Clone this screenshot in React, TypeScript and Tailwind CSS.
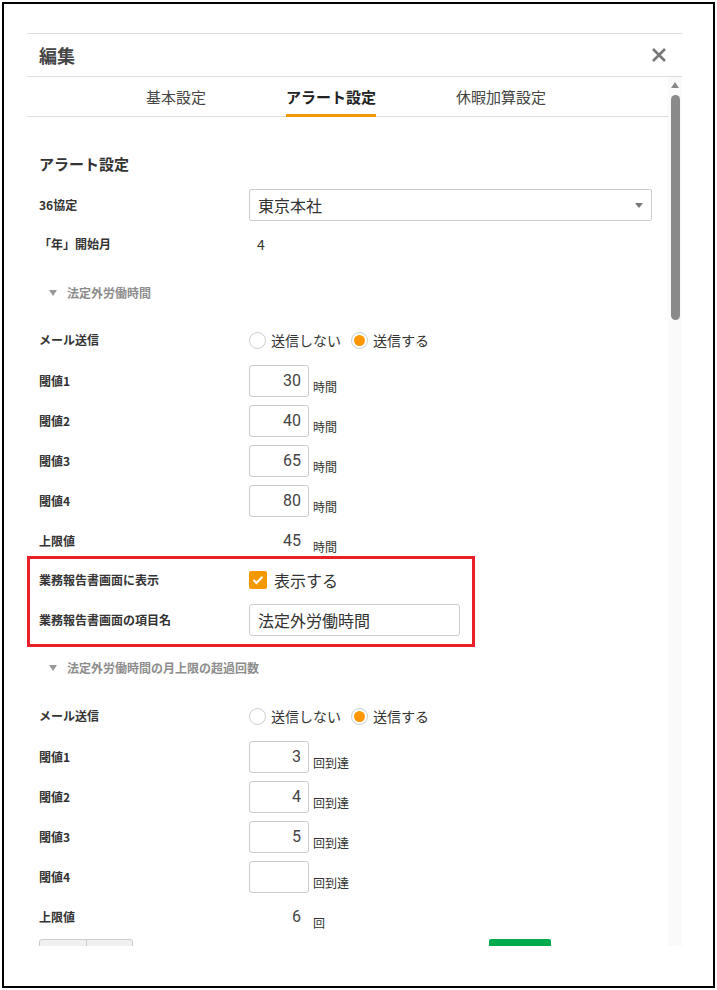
import React from "react";

const FONT = { fontFamily: '"Noto Sans CJK JP", "Noto Sans", sans-serif' };

function Label({ children }: { children: React.ReactNode }) {
  return (
    <div className="w-[210px] shrink-0 text-[12px] font-bold text-[#333] leading-[16px]">
      {children}
    </div>
  );
}

function NumRow({
  label,
  value,
  unit,
  plain,
  first,
}: {
  label: string;
  value: string;
  unit: string;
  plain?: boolean;
  first?: boolean;
}) {
  return (
    <div className={`${first ? "mt-[10px]" : "mt-[8px]"} flex h-[32px] items-center`}>
      <Label>{label}</Label>
      <div className="flex h-full items-end">
        {plain ? (
          <div className="flex h-[32px] w-[60px] items-center justify-end pr-[8px] text-[16px] text-[#444]" style={{ fontFamily: 'Roboto, "Liberation Sans", Arial, sans-serif' }}>
            {value}
          </div>
        ) : (
          <div className="flex h-[32px] w-[60px] items-center justify-end rounded-[3px] border border-[#ccc] bg-white pr-[7px] text-[16px] text-[#444]" style={{ fontFamily: 'Roboto, "Liberation Sans", Arial, sans-serif' }}>
            {value}
          </div>
        )}
        <div className="mb-[2px] ml-[4px] text-[12px] leading-[16px] text-[#333]">{unit}</div>
      </div>
    </div>
  );
}

function SectionHeader({ children, className }: { children: React.ReactNode; className: string }) {
  return (
    <div className={`${className} flex h-[30px] items-center pl-[10px]`}>
      <svg width="8" height="6" viewBox="0 0 8 6" className="mr-[10px]">
        <polygon points="0,0 8,0 4,6" fill="#999" />
      </svg>
      <span className="text-[12px] font-bold text-[#8c8c8c]">{children}</span>
    </div>
  );
}

function Radio({ checked, label }: { checked?: boolean; label: string }) {
  return (
    <div className="flex items-center">
      <div className="flex h-[17px] w-[17px] items-center justify-center rounded-full border border-[#ccc] bg-white">
        {checked && <div className="h-[11px] w-[11px] rounded-full bg-[#ff9800]" />}
      </div>
      <span className="ml-[5px] text-[14px] text-[#333]">{label}</span>
    </div>
  );
}

function MailRow({ className }: { className: string }) {
  return (
    <div className={`${className} flex h-[30px] items-center`}>
      <Label>メール送信</Label>
      <div className="flex items-center gap-[10px]">
        <Radio label="送信しない" />
        <Radio checked label="送信する" />
      </div>
    </div>
  );
}

export default function App() {
  return (
    <div className="h-[990px] w-[717px] bg-white p-[2px]" style={FONT}>
      <div className="h-full border-2 border-black pl-[23px] pt-[29px]">
        <div className="w-[655px]">
          {/* header */}
          <div className="flex h-[44px] items-center justify-between border-y border-[#ddd] pl-[12px] pr-[15px]">
            <span className="text-[18px] font-bold text-[#444]">編集</span>
            <svg width="16" height="16" viewBox="0 0 16 16">
              <path d="M2 2 L14 14 M14 2 L2 14" stroke="#777" strokeWidth="2.6" strokeLinecap="butt" />
            </svg>
          </div>
          {/* body */}
          <div className="flex h-[869px] overflow-hidden">
            <div className="w-[641px]">
              {/* tabs */}
              <div className="flex h-[40px] gap-[80px] border-b border-[#ddd] pl-[119px]">
                <div className="flex items-center pt-[2px] text-[15px] text-[#444]">基本設定</div>
                <div className="-mb-px flex items-center border-b-[3px] border-[#f39800] pt-[3px] text-[15px] font-bold text-[#222]">
                  アラート設定
                </div>
                <div className="flex items-center pt-[2px] text-[15px] text-[#444]">休暇加算設定</div>
              </div>

              <div className="pl-[12px]">
                <div className="mt-[35px] flex h-[24px] items-center text-[15px] font-bold text-[#333]">
                  アラート設定
                </div>

                <div className="mt-[13px] flex h-[32px] items-center">
                  <Label>36協定</Label>
                  <div className="flex h-[32px] w-[403px] items-center justify-between rounded-[2px] border border-[#ccc] pl-[8px] pr-[8px]">
                    <span className="text-[16px] text-[#333]">東京本社</span>
                    <svg width="8" height="5" viewBox="0 0 8 5">
                      <polygon points="0,0 8,0 4,5" fill="#777" />
                    </svg>
                  </div>
                </div>

                <div className="mt-[8px] flex h-[30px] items-center">
                  <Label>「年」開始月</Label>
                  <span className="pl-[8px] text-[14px] text-[#333]">4</span>
                </div>

                <SectionHeader className="mt-[19px]">法定外労働時間</SectionHeader>

                <MailRow className="mt-[17px]" />
                <NumRow first label="閾値1" value="30" unit="時間" />
                <NumRow label="閾値2" value="40" unit="時間" />
                <NumRow label="閾値3" value="65" unit="時間" />
                <NumRow label="閾値4" value="80" unit="時間" />
                <NumRow plain label="上限値" value="45" unit="時間" />

                {/* highlighted block */}
                <div className="-ml-[12px] -mt-px w-[448px] border-[3px] border-[#e8202a] pb-[8px] pl-[9px] pt-[5px]">
                  <div className="flex h-[32px] items-center">
                    <Label>業務報告書画面に表示</Label>
                    <div className="flex items-center">
                      <div className="flex h-[18px] w-[18px] items-center justify-center rounded-[2px] bg-[#f39800]">
                        <svg width="12" height="10" viewBox="0 0 12 10">
                          <path d="M1.5 5 L4.5 8 L10.5 1.8" fill="none" stroke="#fff" strokeWidth="2" />
                        </svg>
                      </div>
                      <span className="ml-[7px] text-[16px] text-[#333]">表示する</span>
                    </div>
                  </div>
                  <div className="mt-[8px] flex h-[32px] items-center">
                    <Label>業務報告書画面の項目名</Label>
                    <div className="flex h-[32px] w-[211px] items-center rounded-[3px] border border-[#ccc] pl-[8px] text-[16px] text-[#333]">
                      法定外労働時間
                    </div>
                  </div>
                </div>

                <SectionHeader className="mt-[6px]">法定外労働時間の月上限の超過回数</SectionHeader>

                <MailRow className="mt-[18px]" />
                <NumRow first label="閾値1" value="3" unit="回到達" />
                <NumRow label="閾値2" value="4" unit="回到達" />
                <NumRow label="閾値3" value="5" unit="回到達" />
                <NumRow label="閾値4" value="" unit="回到達" />
                <NumRow plain label="上限値" value="6" unit="回" />

                <div className="mt-[6px] flex h-[30px] items-start">
                  <div className="flex h-[30px] w-[94px] rounded-t-[3px] border border-[#ccc] bg-[#f0f0f0]">
                    <div className="w-[47px] border-r border-[#ccc]" />
                    <div className="flex-1" />
                  </div>
                  <div className="ml-[356px] h-[30px] w-[62px] rounded-t-[2px] bg-[#00ab4e]" />
                </div>
              </div>
            </div>
            {/* scrollbar */}
            <div className="flex w-[14px] flex-col items-center bg-[#fafafa] pt-[5px]">
              <svg width="8" height="6" viewBox="0 0 8 6">
                <polygon points="4,0 8,6 0,6" fill="#888" />
              </svg>
              <div className="mt-[7px] h-[225px] w-[9px] rounded-full bg-[#8a8a8a]" />
            </div>
          </div>
        </div>
      </div>
    </div>
  );
}
